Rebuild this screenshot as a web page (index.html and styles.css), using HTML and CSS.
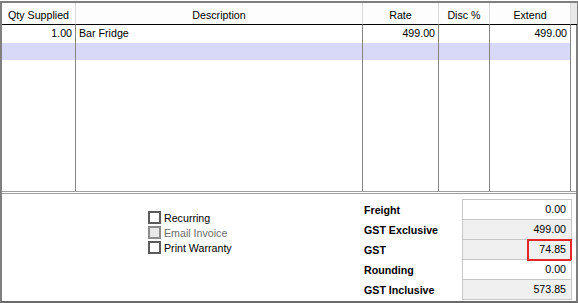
FILE: index.html
```html
<!DOCTYPE html>
<html lang="en">
<head>
    <meta charset="UTF-8">
    <title>Invoice Lines</title>
    <link rel="stylesheet" href="styles.css">
</head>
<body>
    <div class="frame">
        <!-- line items -->
        <div class="grid">
            <div class="head">Qty Supplied</div>
            <div class="head">Description</div>
            <div class="head">Rate</div>
            <div class="head">Disc %</div>
            <div class="head">Extend</div>
            <div class="head filler"></div>

            <div class="cell num">1.00</div>
            <div class="cell">Bar Fridge</div>
            <div class="cell num">499.00</div>
            <div class="cell num"></div>
            <div class="cell num">499.00</div>
            <div class="cell filler"></div>

            <div class="cell new"></div>
            <div class="cell new"></div>
            <div class="cell new"></div>
            <div class="cell new"></div>
            <div class="cell new"></div>
            <div class="cell filler"></div>

            <div class="cell"></div>
            <div class="cell"></div>
            <div class="cell"></div>
            <div class="cell"></div>
            <div class="cell"></div>
            <div class="cell filler"></div>
        </div>

        <!-- footer panel -->
        <div class="panel">
            <div class="options">
                <label class="option"><span class="box"></span>Recurring</label>
                <label class="option disabled"><span class="box"></span>Email Invoice</label>
                <label class="option"><span class="box"></span>Print Warranty</label>
            </div>

            <div class="totals">
                <div class="label">Freight</div>
                <div class="value first">0.00</div>
                <div class="label">GST Exclusive</div>
                <div class="value shaded">499.00</div>
                <div class="label">GST</div>
                <div class="value shaded">74.85<span class="highlight"></span></div>
                <div class="label">Rounding</div>
                <div class="value">0.00</div>
                <div class="label">GST Inclusive</div>
                <div class="value shaded">573.85</div>
            </div>
        </div>
    </div>
</body>
</html>
```

FILE: styles.css
```css
* {
    margin: 0;
    padding: 0;
    box-sizing: border-box;
}

body {
    font-family: "Liberation Sans", Arial, sans-serif;
    font-size: 10.67px;
    color: #000;
    background: #fff;
    padding-top: 1px;
}

.frame {
    width: 578px;
    height: 302px;
    border-top: 2px solid #7f7f7f;
    border-left: 2px solid #7f7f7f;
    border-right: 2px solid #7f7f7f;
    border-bottom: 2px solid #6a6a6a;
    display: flex;
    flex-direction: column;
}

/* line items grid */
.grid {
    height: 191px;
    display: grid;
    grid-template-columns: 74px 287px 76px 51px 81px 1fr;
    grid-template-rows: 22px 18px 17px 1fr;
    border-bottom: 3px double #a0a0a0;
}

.head {
    background: #fdfdfd;
    border-right: 1px solid #dadada;
    border-bottom: 1px solid #000;
    text-align: center;
    padding-top: 3px;
    line-height: 18px;
    white-space: nowrap;
}

.head.filler {
    background: #e9e9e9;
    border-right: none;
}

.cell {
    border-right: 1px solid #858585;
    padding: 0 3px;
    line-height: 17px;
    white-space: nowrap;
}

.cell.filler {
    border-right: none;
}

.cell.num {
    text-align: right;
}

.cell.new {
    background: #d8d8f8;
}

/* footer panel */
.panel {
    flex: 1;
    display: flex;
    padding-left: 146px;
}

.options {
    width: 216px;
    padding-top: 16px;
}

.option {
    display: flex;
    align-items: center;
    gap: 3px;
    height: 15px;
}

.box {
    width: 13px;
    height: 13px;
    border: 2px solid #5b5b5b;
    background: #fff;
}

.option.disabled {
    color: #6d6d6d;
}

.option.disabled .box {
    border-color: #8c8c8c;
    background: #e8e8e8;
}

.totals {
    padding-top: 5px;
    display: grid;
    grid-template-columns: 98px 110px;
    align-content: start;
}

.label {
    font-weight: bold;
    display: flex;
    align-items: center;
}

.value {
    position: relative;
    border: 1px solid #c6c6c6;
    border-top: none;
    text-align: right;
    padding-right: 5px;
    line-height: 19px;
}

.value.first {
    border-top: 1px solid #c6c6c6;
}

.value.shaded {
    background: #f0f0f0;
}

.highlight {
    position: absolute;
    top: -1px;
    right: -1px;
    bottom: -2px;
    left: 64px;
    border: 2px solid #e3262a;
}
```
